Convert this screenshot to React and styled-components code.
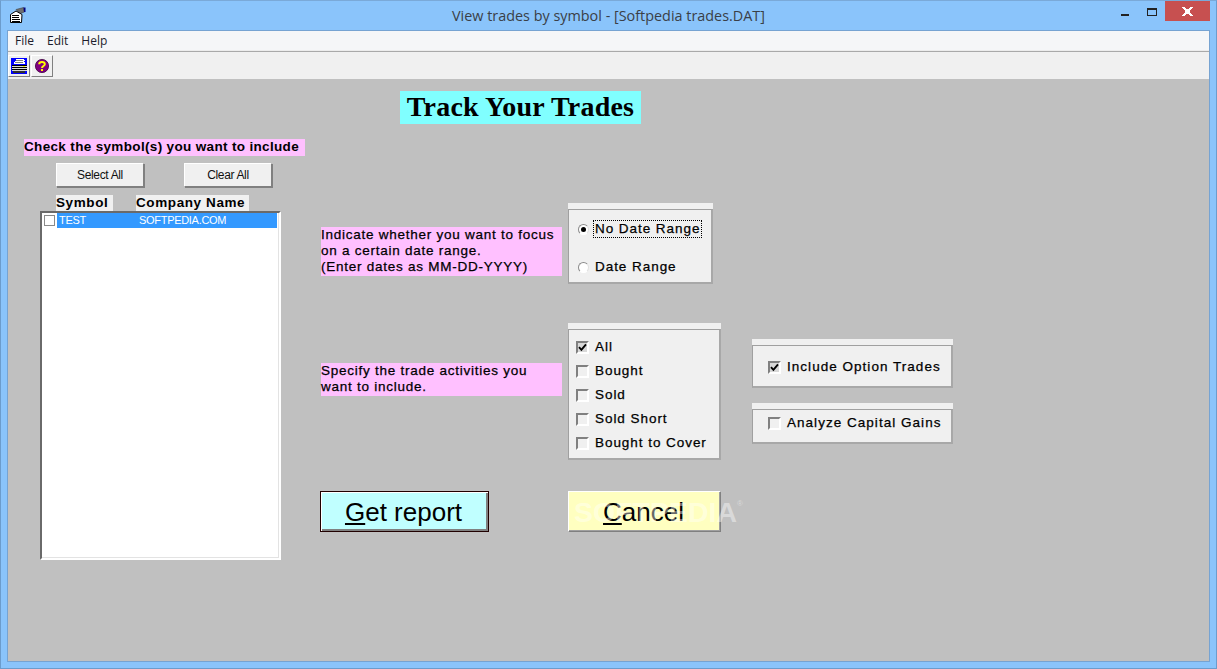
import styled, { createGlobalStyle } from "styled-components";

const Global = createGlobalStyle`
  html, body { margin: 0; padding: 0; background: #8ac4fb; }
  #root { width: 1217px; height: 669px; overflow: hidden; }
`;

const sans = `"Liberation Sans", Arial, sans-serif`;
const ui = `"Open Sans", "Noto Sans", sans-serif`;

const Frame = styled.div`
  box-sizing: border-box;
  width: 1217px;
  height: 669px;
  background: #8ac4fb;
  border: 1px solid #6c9ccc;
  border-top-color: #7aa9d8;
  padding: 0 6px 6px 6px;
  display: flex;
  flex-direction: column;
`;

const TitleBar = styled.div`
  height: 29px;
  flex: none;
  margin: 0 -6px;
  display: flex;
  align-items: flex-start;
  position: relative;
`;

const AppIcon = styled.svg`
  width: 18px;
  height: 18px;
  margin: 5px 0 0 8px;
`;

const Caption = styled.div`
  position: absolute;
  left: 0;
  right: 0;
  top: 5px;
  text-align: center;
  font: 400 14.4px/20px ${ui};
  color: #3a3f47;
`;

const Controls = styled.div`
  margin-left: auto;
  margin-right: 6px;
  display: flex;
  align-items: flex-start;
`;

const MinButton = styled.div`
  width: 8px;
  height: 2px;
  margin: 13px 18px 0 0;
  background: #222;
`;

const MaxButton = styled.div`
  box-sizing: border-box;
  width: 10px;
  height: 8px;
  margin: 7px 8px 0 0;
  border: 1px solid #222;
  border-top-width: 2px;
`;

const CloseButton = styled.div`
  width: 45px;
  height: 20px;
  background: #c75050;
  display: flex;
  align-items: center;
  justify-content: center;
`;

const Inner = styled.div`
  flex: 1;
  display: flex;
  flex-direction: column;
  border: 1px solid #76a3d2;
  min-height: 0;
`;

const MenuBar = styled.div`
  height: 20px;
  flex: none;
  background: #f5f6f8;
  display: flex;
  align-items: center;
  padding: 0 0 0 7px;
  gap: 13px;
  border-bottom: 1px solid #a9a9a9;
  box-shadow: inset 0 -1px 0 #ececec;
`;

const MenuItem = styled.span`
  font: 400 12px/16px ${ui};
  color: #1c1c2c;
`;

const ToolBar = styled.div`
  height: 27px;
  flex: none;
  background: #f0f0f0;
  display: flex;
  gap: 1px;
  padding: 3px 0 0 0;
  box-sizing: border-box;
`;

const ToolButton = styled.div`
  box-sizing: border-box;
  width: 22px;
  height: 22px;
  background: #f0f0f0;
  border: 1px solid;
  border-color: #fff #808080 #808080 #fff;
  display: flex;
  align-items: center;
  justify-content: center;
`;

const Client = styled.div`
  flex: 1;
  background: #c0c0c0;
  display: flex;
  flex-direction: column;
  padding: 12px 0 0 0;
  min-height: 0;
`;

const TitleRow = styled.div`
  margin-left: 392px;
  width: 241px;
  height: 33px;
  background: #80ffff;
  display: flex;
  align-items: center;
  justify-content: center;
`;

const Heading = styled.h1`
  margin: 0 0 2px;
  font: 700 28px/31px "Liberation Serif", "Times New Roman", serif;
  letter-spacing: 0.2px;
  color: #000;
`;

const Body = styled.div`
  display: flex;
  margin-top: 15px;
`;

const LeftCol = styled.div`
  width: 296px;
  margin-left: 16px;
  flex: none;
  display: flex;
  flex-direction: column;
`;

const Hint = styled.div`
  background: #ffc0ff;
  color: #000;
  font: 400 13.5px/16px ${sans};
  letter-spacing: 0.75px;
  -webkit-text-stroke: 0.25px #000;
  box-sizing: border-box;
`;

const SymbolHint = styled(Hint)`
  width: 281px;
  height: 17px;
  white-space: nowrap;
  font-weight: 700;
  letter-spacing: 0.34px;
  -webkit-text-stroke: 0;
`;

const ButtonRow = styled.div`
  display: flex;
  gap: 39px;
  margin: 7px 0 0 32px;
`;

const SmallButton = styled.div`
  box-sizing: border-box;
  width: 88px;
  height: 24px;
  padding-bottom: 1px;
  background: #f0f0f0;
  border: 1px solid;
  border-color: #fff #808080 #808080 #fff;
  box-shadow: 1px 1px 0 #808080;
  margin-right: 1px;
  display: flex;
  align-items: center;
  justify-content: center;
  font: 400 12px/14px ${sans};
  letter-spacing: -0.35px;
  color: #111;
`;

const ColumnHeads = styled.div`
  display: flex;
  margin: 8px 0 0 32px;
  gap: 23px;
`;

const ColumnHead = styled.div`
  width: ${(p) => p.$w}px;
  height: 16px;
  background: #f0f0f0;
  font: 700 13.5px/16px ${sans};
  letter-spacing: 0.6px;
  color: #000;
  white-space: nowrap;
`;

const ListBox = styled.div`
  box-sizing: border-box;
  margin-left: 16px;
  width: 241px;
  height: 349px;
  background: #fff;
  border: 2px solid;
  border-color: #6a6a6a #fff #fff #6a6a6a;
  box-shadow: inset -1px -1px 0 #e3e3e3;
  padding: 0 2px 0 2px;
`;

const ListRow = styled.div`
  display: flex;
  align-items: center;
  gap: 2px;
`;

const ListCheck = styled.div`
  box-sizing: border-box;
  width: 11px;
  height: 11px;
  border: 1px solid #8a8a8a;
  background: #fff;
  flex: none;
`;

const ListText = styled.div`
  flex: 1;
  height: 15px;
  background: #3399ff;
  display: flex;
  color: #fff;
  font: 400 11px/15px ${sans};
  letter-spacing: -0.3px;
`;

const SymbolCell = styled.span`
  width: 82px;
  padding-left: 2px;
  box-sizing: border-box;
`;

const RightCol = styled.div`
  display: flex;
  flex-direction: column;
  padding-top: 64px;
`;

const FormRow = styled.div`
  display: flex;
  align-items: flex-start;
  margin-top: ${(p) => p.$top || 0}px;
`;

const LabelCell = styled.div`
  width: 248px;
  padding: ${(p) => p.$top}px 0 0 1px;
  box-sizing: border-box;
  flex: none;
`;

const FormHint = styled(Hint)`
  width: 241px;
  height: ${(p) => p.$h}px;
  white-space: pre-line;
`;

const Group = styled.div`
  box-sizing: border-box;
  width: ${(p) => p.$w}px;
  height: ${(p) => p.$h}px;
  background: #f0f0f0;
  padding-top: 6px;
  display: flex;
  flex: none;
`;

const GroupFrame = styled.div`
  flex: 1;
  box-sizing: border-box;
  border: 1px solid #a0a0a0;
  border-bottom-width: 2px;
  border-right-width: 2px;
  border-bottom-color: #a8a8a8;
  border-right-color: #a8a8a8;
  display: flex;
  flex-direction: column;
  padding: ${(p) => p.$pad};
  gap: ${(p) => p.$gap}px;
`;

const Option = styled.div`
  display: flex;
  align-items: center;
  height: 18px;
  gap: 5px;
  font: 400 13.5px/16px ${sans};
  letter-spacing: ${(p) => p.$track || 0.95}px;
  -webkit-text-stroke: 0.25px #000;
  color: #000;
  white-space: nowrap;
`;

const OptionText = styled.span`
  padding: 0 1px;
  line-height: 16px;
  outline: ${(p) => (p.$focus ? "1px dotted #000" : "none")};
  outline-offset: 0;
`;

const Radio = styled.span`
  box-sizing: border-box;
  width: 11px;
  height: 11px;
  border-radius: 50%;
  flex: none;
  background: #fff;
  border: 1px solid;
  border-color: #8a8a8a #e0e0e0 #fff #8a8a8a;
  display: flex;
  align-items: center;
  justify-content: center;
  &::after {
    content: "";
    width: 5px;
    height: 5px;
    border-radius: 50%;
    background: ${(p) => (p.$on ? "#000" : "transparent")};
  }
`;

const CheckBox = styled.span`
  box-sizing: border-box;
  width: 13px;
  height: 13px;
  flex: none;
  background: ${(p) => (p.$on ? "#d8d8d8" : "#f0f0f0")};
  border: 2px solid;
  border-color: #808080 #fff #fff #808080;
  display: flex;
  align-items: center;
  justify-content: center;
`;

const SideCol = styled.div`
  margin: 16px 0 0 31px;
  display: flex;
  flex-direction: column;
  gap: 15px;
`;

const BigButton = styled.div`
  box-sizing: border-box;
  height: 41px;
  width: ${(p) => p.$w}px;
  padding-right: 2px;
  flex: none;
  background: ${(p) => p.$bg};
  border: 1px solid;
  border-color: ${(p) => p.$edge};
  box-shadow: ${(p) => p.$inset};
  display: flex;
  align-items: center;
  justify-content: center;
  font: 400 26px/30px ${sans};
  color: #000;
  u { text-underline-offset: 2px; text-decoration-thickness: 2px; }
`;

const ActionRow = styled(FormRow)`
  position: relative;
`;

const ActionGap = styled.div`
  width: 79px;
  flex: none;
`;

const Watermark = styled.div`
  position: absolute;
  left: 254px;
  top: 3px;
  font: 700 28.5px/36px ${sans};
  color: rgba(255, 255, 255, 0.42);
  pointer-events: none;
  white-space: nowrap;
  sup { font-size: 8px; font-weight: 400; vertical-align: 16px; line-height: 0; }
`;

const Tick = () => (
  <svg width="9" height="9" viewBox="0 0 9 9">
    <path d="M1 4.2L3.4 6.8L8 1.4" fill="none" stroke="#000" strokeWidth="1.9" />
  </svg>
);

const Check = ({ on, track, children }) => (
  <Option $track={track}>
    <CheckBox $on={on}>{on && <Tick />}</CheckBox>
    <OptionText>{children}</OptionText>
  </Option>
);

const App = () => {
  return (
    <>
      <Global />
      <Frame>
        <TitleBar>
          <AppIcon viewBox="0 0 18 18">
            <path d="M7 3.5L14.5 1.5L15.5 6L11 7.5z" fill="#707070" stroke="#333" strokeWidth="0.5" />
            <path d="M14.5 1.5h2v4.5h-1.5z" fill="#000080" />
            <path d="M1.5 8.5L7 5L13 8.5L12.5 16.5H1.5z" fill="#fff" stroke="#000" />
            <path d="M3 9.5h7M3 11.5h7M3 13.5h8M3 15.5h8" stroke="#000" strokeWidth="1" />
          </AppIcon>
          <Caption>View trades by symbol - [Softpedia trades.DAT]</Caption>
          <Controls>
            <MinButton />
            <MaxButton />
            <CloseButton>
              <svg width="11" height="9" viewBox="0 0 11 9" shapeRendering="crispEdges">
                <path d="M0 0h3v1h1v1h3V1h1V0h3v1h-1v1H9v1H8v3h1v1h1v1h1v1H8V8H7V7H4v1H3v1H0V8h1V7h1V6h1V3H2V2H1V1H0z" fill="#fff" />
              </svg>
            </CloseButton>
          </Controls>
        </TitleBar>
        <Inner>
          <MenuBar>
            <MenuItem>File</MenuItem>
            <MenuItem>Edit</MenuItem>
            <MenuItem>Help</MenuItem>
          </MenuBar>
          <ToolBar>
            <ToolButton>
              <svg width="18" height="18" viewBox="0 0 18 18" shapeRendering="crispEdges">
                <rect x="1" y="1" width="16" height="16" fill="#0000ff" />
                <path d="M6 2h8v1h1v1h-1v1h1v2H4V5h1V4h1z" fill="#fff" />
                <path d="M6 3h7v1H6zM5 5h8v1H5z" fill="#808080" />
                <path d="M2 8h15v1H2zM2 10h15v1H2zM2 12h15v1H2z" fill="#000" />
                <path d="M2 9h15v1H2zM2 11h15v1H2zM2 13h15v1H2z" fill="#d8d8d8" />
                <path d="M3 14h12v2H3z" fill="#303030" />
                <path d="M13 9h2v1h-2z" fill="#ffff00" />
              </svg>
            </ToolButton>
            <ToolButton>
              <svg width="16" height="16" viewBox="0 0 16 16">
                <circle cx="8" cy="8" r="6.6" fill="#800080" stroke="#400040" strokeWidth="0.8" />
                <path d="M5.2 6.2C5.2 3.1 10.8 3.1 10.8 6.2C10.8 8 8 8 8 10" fill="none" stroke="#ffff00" strokeWidth="2" />
                <rect x="7" y="11" width="2" height="2" fill="#ffff00" />
              </svg>
            </ToolButton>
          </ToolBar>
          <Client>
            <TitleRow>
              <Heading>Track Your Trades</Heading>
            </TitleRow>
            <Body>
              <LeftCol>
                <SymbolHint>Check the symbol(s) you want to include</SymbolHint>
                <ButtonRow>
                  <SmallButton>Select All</SmallButton>
                  <SmallButton>Clear All</SmallButton>
                </ButtonRow>
                <ColumnHeads>
                  <ColumnHead $w={57}>Symbol</ColumnHead>
                  <ColumnHead $w={113}>Company Name</ColumnHead>
                </ColumnHeads>
                <ListBox>
                  <ListRow>
                    <ListCheck />
                    <ListText>
                      <SymbolCell>TEST</SymbolCell>
                      <span>SOFTPEDIA.COM</span>
                    </ListText>
                  </ListRow>
                </ListBox>
              </LeftCol>
              <RightCol>
                <FormRow>
                  <LabelCell $top={24}>
                    <FormHint $h={49}>{"Indicate whether you want to focus\non a certain date range.\n(Enter dates as MM-DD-YYYY)"}</FormHint>
                  </LabelCell>
                  <Group $w={145} $h={81}>
                    <GroupFrame $pad="10px 0 0 9px" $gap={20}>
                      <Option>
                        <Radio $on />
                        <OptionText $focus>No Date Range</OptionText>
                      </Option>
                      <Option>
                        <Radio />
                        <OptionText>Date Range</OptionText>
                      </Option>
                    </GroupFrame>
                  </Group>
                </FormRow>
                <FormRow $top={39}>
                  <LabelCell $top={40}>
                    <FormHint $h={33}>{"Specify the trade activities you\nwant to include."}</FormHint>
                  </LabelCell>
                  <Group $w={153} $h={137}>
                    <GroupFrame $pad="8px 0 0 7px" $gap={6}>
                      <Check on>All</Check>
                      <Check>Bought</Check>
                      <Check>Sold</Check>
                      <Check>Sold Short</Check>
                      <Check>Bought to Cover</Check>
                    </GroupFrame>
                  </Group>
                  <SideCol>
                    <Group $w={201} $h={49}>
                      <GroupFrame $pad="12px 0 0 15px" $gap={0}>
                        <Check on track={1.03}>Include Option Trades</Check>
                      </GroupFrame>
                    </Group>
                    <Group $w={201} $h={41}>
                      <GroupFrame $pad="4px 0 0 15px" $gap={0}>
                        <Check track={1.03}>Analyze Capital Gains</Check>
                      </GroupFrame>
                    </Group>
                  </SideCol>
                </FormRow>
                <ActionRow $top={31}>
                  <BigButton
                    $w={169}
                    $bg="#c0ffff"
                    $edge="#200000"
                    $inset="inset 1px 1px 0 #fff, inset -2px -2px 0 #808080"
                  >
                    <span><u>G</u>et report</span>
                  </BigButton>
                  <ActionGap />
                  <BigButton
                    $w={153}
                    $bg="#ffffc0"
                    $edge="#fff #808080 #808080 #fff"
                    $inset="inset -1px -1px 0 #a0a0a0"
                  >
                    <span><u>C</u>ancel</span>
                  </BigButton>
                  <Watermark>SOFTPEDIA<sup>®</sup></Watermark>
                </ActionRow>
              </RightCol>
            </Body>
          </Client>
        </Inner>
      </Frame>
    </>
  );
};

export default App;
